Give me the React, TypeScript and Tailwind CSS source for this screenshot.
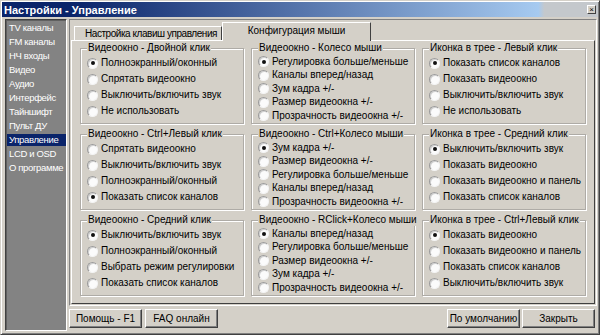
const SIDEBAR = [
  'TV каналы',
  'FM каналы',
  'НЧ входы',
  'Видео',
  'Аудио',
  'Интерфейс',
  'Тайншифт',
  'Пульт ДУ',
  'Управление',
  'LCD и OSD',
  'О программе',
]

type Group = { title: string; options: string[]; checked: number }

const GROUPS: Group[] = [
  {
    title: 'Видеоокно - Двойной клик',
    options: ['Полноэкранный/оконный', 'Спрятать видеоокно', 'Выключить/включить звук', 'Не использовать'],
    checked: 0,
  },
  {
    title: 'Видеоокно - Колесо мыши',
    options: [
      'Регулировка больше/меньше',
      'Каналы вперед/назад',
      'Зум кадра +/-',
      'Размер видеоокна +/-',
      'Прозрачность видеоокна +/-',
    ],
    checked: 0,
  },
  {
    title: 'Иконка в трее - Левый клик',
    options: ['Показать список каналов', 'Показать видеоокно', 'Выключить/включить звук', 'Не использовать'],
    checked: 0,
  },
  {
    title: 'Видеоокно - Ctrl+Левый клик',
    options: ['Спрятать видеоокно', 'Выключить/включить звук', 'Полноэкранный/оконный', 'Показать список каналов'],
    checked: 3,
  },
  {
    title: 'Видеоокно - Ctrl+Колесо мыши',
    options: [
      'Зум кадра +/-',
      'Размер видеоокна +/-',
      'Регулировка больше/меньше',
      'Каналы вперед/назад',
      'Прозрачность видеоокна +/-',
    ],
    checked: 0,
  },
  {
    title: 'Иконка в трее - Средний клик',
    options: ['Выключить/включить звук', 'Показать видеоокно', 'Показать видеоокно и панель', 'Показать список каналов'],
    checked: 0,
  },
  {
    title: 'Видеоокно - Средний клик',
    options: ['Выключить/включить звук', 'Полноэкранный/оконный', 'Выбрать режим регулировки', 'Показать список каналов'],
    checked: 0,
  },
  {
    title: 'Видеоокно - RClick+Колесо мыши',
    options: [
      'Каналы вперед/назад',
      'Регулировка больше/меньше',
      'Размер видеоокна +/-',
      'Зум кадра +/-',
      'Прозрачность видеоокна +/-',
    ],
    checked: 0,
  },
  {
    title: 'Иконка в трее - Ctrl+Левый клик',
    options: ['Показать видеоокно', 'Показать видеоокно и панель', 'Показать список каналов', 'Выключить/включить звук'],
    checked: 0,
  },
]

function Radio({ checked }: { checked: boolean }) {
  return (
    <span className="flex h-[11px] w-[11px] shrink-0 items-center justify-center rounded-full border border-[#9a9a9a] border-b-[#f4f4f4] border-r-[#f4f4f4] bg-[#fbfbfb] shadow-[inset_1px_1px_0_#d0d0d0]">
      {checked && <span className="h-[4px] w-[4px] rounded-full bg-[#111]" />}
    </span>
  )
}

function GroupBox({ group }: { group: Group }) {
  const rowH = group.options.length === 5 ? 'h-[13.5px]' : 'h-[16px]'
  return (
    <fieldset className="h-[82px] min-w-0 border border-[#aeaba6] px-[6px] shadow-[inset_1px_1px_0_#fff,1px_1px_0_#fff]">
      <legend className="whitespace-nowrap bg-[#d4d0c8] px-px text-[10px] leading-[12px]">{group.title}</legend>
      <div className="flex flex-col pt-px">
        {group.options.map((opt, i) => (
          <div key={i} className={`flex items-center gap-[3px] ${rowH}`}>
            <Radio checked={i === group.checked} />
            <span className="whitespace-nowrap text-[10px] leading-[12px]">{opt}</span>
          </div>
        ))}
      </div>
    </fieldset>
  )
}

function Button({ label, className = '' }: { label: string; className?: string }) {
  return (
    <div
      className={`flex h-[19px] w-[73px] items-center justify-center whitespace-nowrap border border-white border-b-[#404040] border-r-[#404040] shadow-[inset_-1px_-1px_0_#808080] text-[10px] ${className}`}
    >
      {label}
    </div>
  )
}

export default function App() {
  return (
    <div className="flex h-[335px] w-[600px] flex-col border border-[#d4d0c8] border-b-[#404040] border-r-[#404040] bg-[#d4d0c8] p-px font-['Liberation_Sans',Arial,sans-serif] text-black shadow-[inset_1px_1px_0_#fff,inset_-1px_-1px_0_#808080]">
      <div className="flex h-[15px] shrink-0 items-center justify-between bg-[linear-gradient(to_right,#0a246a_12%,#a6caf0_90%,#c4c8cc_91%)] pl-[2px] pr-[2px]">
        <span className="whitespace-nowrap text-[11px] font-bold leading-[14px] text-white">Настройки - Управление</span>
        <span className="flex h-[9px] w-[9px] items-center justify-center border border-white border-b-[#404040] border-r-[#404040] bg-[#d4d0c8] text-[8px] leading-none">
          ×
        </span>
      </div>

      <div className="flex min-h-0 flex-1 gap-[2px] pl-[3px] pr-[1px] pt-[2px]">
        <div className="mb-[2px] flex w-[62px] shrink-0 flex-col gap-[2px] overflow-hidden border border-[#404040] border-b-white border-r-white bg-[#838383] pl-px pt-[2px] shadow-[inset_1px_1px_0_#606060]">
          {SIDEBAR.map((item) => (
            <div
              key={item}
              className={`flex h-[12px] items-center whitespace-nowrap pl-[2px] text-[9.5px] leading-[12px] tracking-[-0.35px] text-white ${
                item === 'Управление' ? 'bg-[#0a246a]' : ''
              }`}
            >
              {item}
            </div>
          ))}
        </div>

        <div className="flex min-w-0 flex-1 flex-col">
          <div className="flex h-[287px] flex-col border border-[#808080] border-b-white border-r-white p-px">
            <div className="flex h-[19px] items-end pl-[3px]">
              <div className="flex h-[14px] w-[148px] items-center whitespace-nowrap border border-b-0 border-white border-r-[#404040] pl-[10px] text-[10px] tracking-[-0.45px]">
                Настройка клавиш управления
              </div>
              <div className="relative -mb-px flex h-[19px] w-[149px] items-center justify-center whitespace-nowrap border border-b-0 border-white border-r-[#404040] bg-[#d4d0c8] pb-[3px] text-[10px]">
                Конфигурация мыши
              </div>
            </div>
            <div className="flex-1 border border-white border-b-[#404040] border-r-[#404040] px-[8px] pt-px">
              <div className="grid grid-cols-3 gap-x-[7px] gap-y-[4px]">
                {GROUPS.map((g) => (
                  <GroupBox key={g.title} group={g} />
                ))}
              </div>
            </div>
          </div>

          <div className="mt-[3px] flex">
            <Button label="Помощь - F1" />
            <Button label="FAQ онлайн" className="ml-[3px]" />
            <Button label="По умолчанию" className="ml-auto" />
            <Button label="Закрыть" className="ml-[2px] mr-[2px]" />
          </div>
        </div>
      </div>
    </div>
  )
}
